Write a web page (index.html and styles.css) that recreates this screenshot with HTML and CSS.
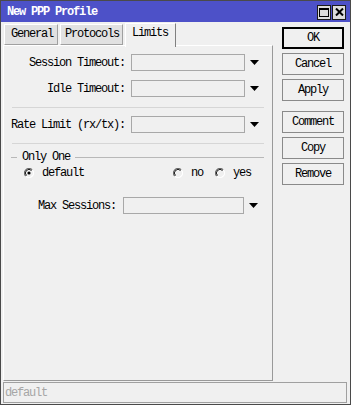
FILE: index.html
```html
<!DOCTYPE html>
<html>
<head>
<meta charset="utf-8">
<link rel="stylesheet" href="styles.css">
</head>
<body>
<div class="window">
  <div class="titlebar">
    <span class="title">New PPP Profile</span>
    <div class="wbtns">
      <span class="wbtn"><svg width="10" height="9" viewBox="0 0 10 9"><rect x="0.5" y="0.5" width="9" height="8" fill="none" stroke="#000"/><rect x="0" y="0" width="10" height="2" fill="#000"/></svg></span>
      <span class="wbtn"><svg width="9" height="8" viewBox="0 0 9 8"><path d="M1 0.5 L8 7.5 M8 0.5 L1 7.5" stroke="#000" stroke-width="2"/></svg></span>
    </div>
  </div>
  <div class="main">
    <div class="left">
      <div class="tabs">
        <div class="tab tab-general">General</div>
        <div class="tab tab-protocols">Protocols</div>
        <div class="tab tab-limits active">Limits</div>
      </div>
      <div class="panel">
        <div class="row r1">
          <span class="label">Session Timeout:</span>
          <span class="field"></span>
          <svg class="arrow" width="9" height="5" viewBox="0 0 9 5"><polygon points="0,0 9,0 4.5,5" fill="#000"/></svg>
        </div>
        <div class="row r2">
          <span class="label">Idle Timeout:</span>
          <span class="field"></span>
          <svg class="arrow" width="9" height="5" viewBox="0 0 9 5"><polygon points="0,0 9,0 4.5,5" fill="#000"/></svg>
        </div>
        <div class="sep s1"></div>
        <div class="row r3">
          <span class="label">Rate Limit (rx/tx):</span>
          <span class="field"></span>
          <svg class="arrow" width="9" height="5" viewBox="0 0 9 5"><polygon points="0,0 9,0 4.5,5" fill="#000"/></svg>
        </div>
        <div class="sep s2"></div>
        <div class="group">
          <span class="gline short"></span>
          <span class="gtitle">Only One</span>
          <span class="gline long"></span>
        </div>
        <div class="radios">
          <span class="radio">
            <svg width="10" height="10" viewBox="0 0 10 10"><path d="M8.2 1.8 A4.5 4.5 0 0 0 1.8 8.2" fill="none" stroke="#6a6a6a" stroke-width="1.2"/><path d="M1.8 8.2 A4.5 4.5 0 0 0 8.2 1.8" fill="none" stroke="#fff" stroke-width="1.2"/><path d="M7.5 2.5 A3.4 3.4 0 0 0 2.5 7.5" fill="none" stroke="#222" stroke-width="1"/><circle cx="5" cy="5" r="1.6" fill="#000"/></svg>
            <span class="rtext">default</span>
          </span>
          <span class="radio rno">
            <svg width="10" height="10" viewBox="0 0 10 10"><path d="M8.2 1.8 A4.5 4.5 0 0 0 1.8 8.2" fill="none" stroke="#6a6a6a" stroke-width="1.2"/><path d="M1.8 8.2 A4.5 4.5 0 0 0 8.2 1.8" fill="none" stroke="#fff" stroke-width="1.2"/><path d="M7.5 2.5 A3.4 3.4 0 0 0 2.5 7.5" fill="none" stroke="#222" stroke-width="1"/></svg>
            <span class="rtext">no</span>
          </span>
          <span class="radio ryes">
            <svg width="10" height="10" viewBox="0 0 10 10"><path d="M8.2 1.8 A4.5 4.5 0 0 0 1.8 8.2" fill="none" stroke="#6a6a6a" stroke-width="1.2"/><path d="M1.8 8.2 A4.5 4.5 0 0 0 8.2 1.8" fill="none" stroke="#fff" stroke-width="1.2"/><path d="M7.5 2.5 A3.4 3.4 0 0 0 2.5 7.5" fill="none" stroke="#222" stroke-width="1"/></svg>
            <span class="rtext">yes</span>
          </span>
        </div>
        <div class="row rmax">
          <span class="label">Max Sessions:</span>
          <span class="field"></span>
          <svg class="arrow" width="9" height="5" viewBox="0 0 9 5"><polygon points="0,0 9,0 4.5,5" fill="#000"/></svg>
        </div>
      </div>
    </div>
    <div class="right">
      <div class="btn default">OK</div>
      <div class="btn">Cancel</div>
      <div class="btn">Apply</div>
      <div class="btn gap">Comment</div>
      <div class="btn">Copy</div>
      <div class="btn">Remove</div>
    </div>
  </div>
  <div class="status">default</div>
</div>
</body>
</html>
```

FILE: styles.css
```css
* { box-sizing: border-box; }
html, body { margin: 0; padding: 0; background: #f0f0f0; }
body {
  font-family: "Liberation Mono", "DejaVu Sans Mono", monospace;
  font-size: 12px;
  letter-spacing: -1.2px;
  color: #000;
}
.window {
  width: 351px;
  height: 405px;
  border: 1px solid #4a4a4a;
  display: flex;
  flex-direction: column;
  background: #f0f0f0;
}
.titlebar {
  height: 21px;
  background: #4d51c8;
  display: flex;
  align-items: center;
  padding-left: 6px;
  flex: none;
}
.title {
  color: #fff;
  font-weight: bold;
}
.wbtns {
  margin-left: auto;
  margin-right: 4px;
  display: flex;
  gap: 1px;
  margin-top: 1px;
}
.wbtn {
  width: 14px;
  height: 15px;
  background: #dcdcdc;
  border: 1px solid #1a1a1a;
  display: flex;
  align-items: center;
  justify-content: center;
}
.main {
  flex: 1;
  display: flex;
  min-height: 0;
}
.left {
  margin-left: 2px;
  width: 270px;
  display: flex;
  flex-direction: column;
}
.tabs {
  height: 23px;
  display: flex;
  gap: 2px;
  padding-left: 1px;
  flex: none;
  position: relative;
  z-index: 1;
}
.tab {
  margin-top: 2px;
  height: 21px;
  background: #e1e1e1;
  border: 1px solid;
  border-color: #fff #a0a0a0 #a0a0a0 #fff;
  line-height: 19px;
  white-space: nowrap;
}
.tab-general { width: 54px; padding-left: 6px; }
.tab-protocols { width: 63px; padding-left: 4px; }
.tab-limits { width: 51px; padding-left: 6px; }
.tab.active {
  margin-top: 1px;
  height: 24px;
  background: #f0f0f0;
  border-bottom: none;
  border-right-color: #808080;
  line-height: 18px;
}
.panel {
  flex: 1;
  border: 1px solid;
  border-color: #fff #999 #999 #fff;
  padding-top: 8px;
  display: flex;
  flex-direction: column;
}
.row {
  display: flex;
  align-items: center;
  height: 17px;
}
.label {
  white-space: nowrap;
}
.r1 .label, .r2 .label, .r3 .label {
  width: 114px;
  margin-left: 7px;
  text-align: right;
  margin-right: 6px;
}
.field {
  width: 114px;
  height: 17px;
  border: 1px solid #a8a8a8;
  background: #f0f0f0;
}
.arrow { margin-left: 5px; display: block; }
.r2 { margin-top: 9px; }
.sep {
  margin-left: 8px;
  width: 252px;
  border-top: 1px solid #d6d6d6;
}
.s1 { margin-top: 10px; }
.r3 { margin-top: 8px; }
.s2 { margin-top: 10px; }
.group {
  margin-top: 7px;
  height: 12px;
  display: flex;
  align-items: center;
  padding-left: 7px;
  padding-right: 8px;
}
.gline { border-top: 1px solid #b8b8b8; height: 0; }
.gline.short { width: 6px; }
.gline.long { flex: 1; }
.gtitle { margin: 0 5px; }
.radios {
  margin-top: 4px;
  height: 12px;
  display: flex;
  align-items: center;
  padding-left: 20px;
}
.radio { display: flex; align-items: center; gap: 8px; }
.radio svg { display: block; }
.rno { margin-left: 89px; }
.ryes { margin-left: 12px; }
.rmax { margin-top: 18px; }
.rmax .label { margin-left: 34px; margin-right: 7px; }
.rmax .field { width: 121px; }
.right {
  margin-left: 9px;
  width: 62px;
  padding-top: 5px;
  display: flex;
  flex-direction: column;
  gap: 4px;
}
.btn {
  height: 22px;
  border: 1px solid #8a8a8a;
  background: #f0f0f0;
  display: flex;
  align-items: center;
  justify-content: center;
}
.btn.default { border: 2px solid #000; }
.btn.gap { margin-top: 6px; }
.status {
  flex: none;
  height: 21px;
  margin: 1px 3px 1px 2px;
  border: 1px solid #a0a0a0;
  color: #a6a6a6;
  padding-left: 1px;
  display: flex;
  align-items: center;
}
```
